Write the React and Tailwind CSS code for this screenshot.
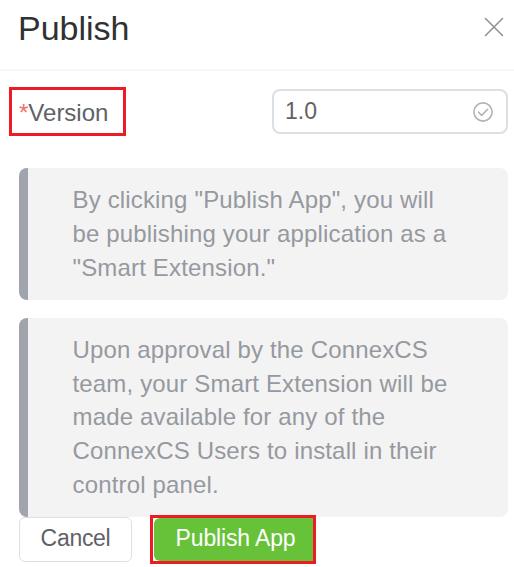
function CloseIcon() {
  return (
    <svg width="20" height="20" viewBox="0 0 20 20" fill="none" stroke="#909399" strokeWidth="1.6" strokeLinecap="round">
      <path d="M1.5 1.5 18.5 18.5M18.5 1.5 1.5 18.5" />
    </svg>
  );
}

function CheckIcon() {
  return (
    <svg width="20" height="20" viewBox="0 0 20 20" fill="none" stroke="#b1b3b8" strokeWidth="1.6" strokeLinecap="round" strokeLinejoin="round">
      <circle cx="10" cy="10" r="9.1" />
      <path d="m5.6 10.2 3.1 3.2 5.9-6.1" />
    </svg>
  );
}

function Notice({ lines, className }) {
  return (
    <div className={`ml-[19px] w-[489px] rounded-lg border-l-[9px] border-[#a0a4ad] bg-[#f3f3f3] pl-[44.5px] text-[24px] leading-[33.8px] tracking-[0.16px] text-[#96999f] ${className}`}>
      {lines.map((line) => (
        <p key={line} className="whitespace-nowrap">{line}</p>
      ))}
    </div>
  );
}

export default function App() {
  return (
    <div className="h-[567px] w-[514px] overflow-hidden bg-white font-['Liberation_Sans',Arial,sans-serif]">
      <header className="flex h-[71px] items-start justify-between border-b-2 border-[#f5f9fd] pr-[10px] pl-[18px]">
        <h1 className="pt-[8px] text-[34px] leading-[40px] text-[#303133]">Publish</h1>
        <button className="mt-[17px]" aria-label="Close"><CloseIcon /></button>
      </header>

      <div className="flex h-[97px] items-start justify-between pr-[6px] pl-[9px]">
        <label className="mt-[16px] flex h-[49px] w-[117px] items-center border-[3px] border-[#ed1c24] pt-[2px] pl-[7px] text-[24px] text-[#606266]">
          <span className="text-[#f56c6c]">*</span>Version
        </label>
        <div className="mt-[18px] flex h-[45px] w-[236px] items-center justify-between rounded-lg border-2 border-[#dcdfe6] pr-[13px] pl-[11px] text-[23px] text-[#606266]">
          <span className="-mt-px">1.0</span>
          <CheckIcon />
        </div>
      </div>

      <Notice
        className="h-[132px] pt-[15px]"
        lines={['By clicking "Publish App", you will', 'be publishing your application as a', '"Smart Extension."']}
      />
      <Notice
        className="mt-[18px] h-[199px] pt-[14.8px]"
        lines={[
          'Upon approval by the ConnexCS',
          'team, your Smart Extension will be',
          'made available for any of the',
          'ConnexCS Users to install in their',
          'control panel.',
        ]}
      />

      <footer className="-mt-[2px] flex items-start gap-[18px] pl-[19px] text-[23px]">
        <button className="mt-[2px] flex h-[45px] w-[113px] items-center justify-center rounded-md border border-[#dcdfe6] bg-white pb-[3px] tracking-[-0.3px] text-[#606266]">
          Cancel
        </button>
        <div className="h-[49px] w-[166px] border-[3px] border-[#ed1c24] bg-white pl-px">
          <button className="flex h-full w-full items-center justify-center rounded-l-md bg-[#67c23a] pb-[3px] pl-[4px] tracking-[-0.15px] text-white">
            Publish App
          </button>
        </div>
      </footer>
    </div>
  );
}
